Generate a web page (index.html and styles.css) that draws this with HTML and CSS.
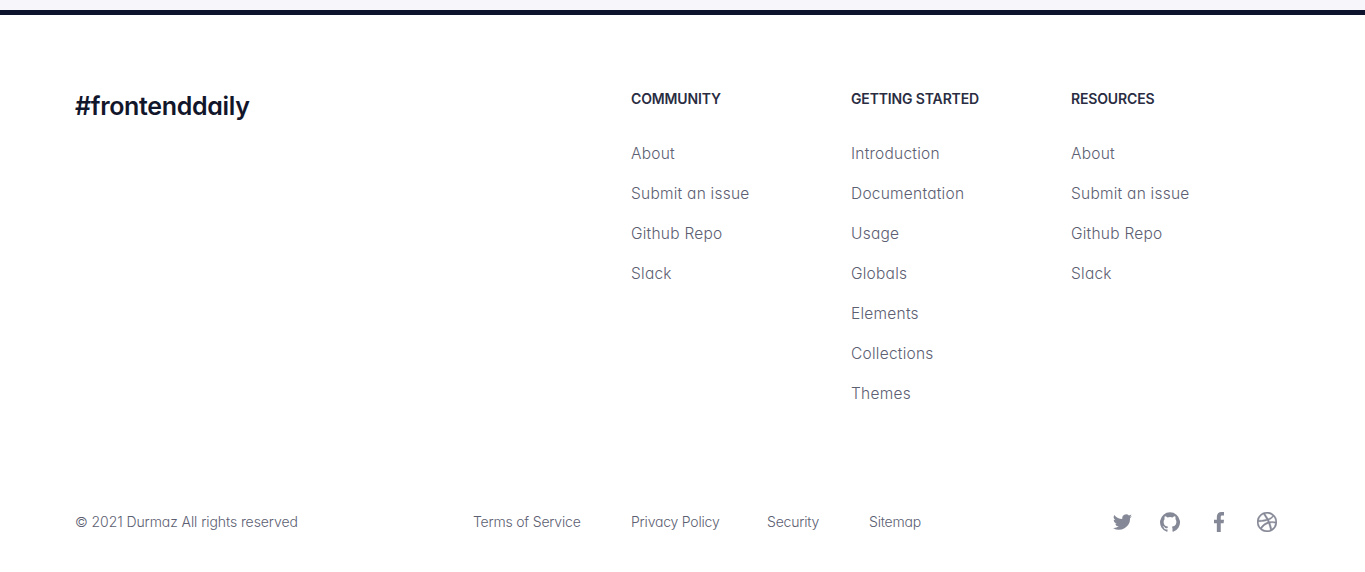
FILE: index.html
```html
<!DOCTYPE html>
<html lang="en">
<head>
<meta charset="utf-8">
<title>#frontenddaily</title>
<link rel="stylesheet" href="styles.css">
</head>
<body>
<footer class="footer">
  <div class="footer-main">
    <a class="brand">#frontenddaily</a>
    <nav class="column">
      <h2 class="heading">COMMUNITY</h2>
      <ul class="links"><li>About</li><li>Submit an issue</li><li>Github Repo</li><li>Slack</li></ul>
    </nav>
    <nav class="column">
      <h2 class="heading">GETTING STARTED</h2>
      <ul class="links"><li>Introduction</li><li>Documentation</li><li>Usage</li><li>Globals</li><li>Elements</li><li>Collections</li><li>Themes</li></ul>
    </nav>
    <nav class="column">
      <h2 class="heading">RESOURCES</h2>
      <ul class="links"><li>About</li><li>Submit an issue</li><li>Github Repo</li><li>Slack</li></ul>
    </nav>
  </div>
  <div class="footer-bottom">
    <span class="copyright">© 2021 Durmaz All rights reserved</span>
    <nav class="legal"><a>Terms of Service</a><a>Privacy Policy</a><a>Security</a><a>Sitemap</a></nav>
    <div class="social">
      <svg class="icon icon-twitter" viewBox="0 0 24 24"><path d="M23.95 4.57a10 10 0 0 1-2.82.78 4.96 4.96 0 0 0 2.16-2.73 9.9 9.9 0 0 1-3.12 1.19 4.92 4.92 0 0 0-8.38 4.48A13.98 13.98 0 0 1 1.64 3.16a4.92 4.92 0 0 0 1.52 6.57 4.9 4.9 0 0 1-2.23-.61v.06a4.92 4.92 0 0 0 3.95 4.83 4.9 4.9 0 0 1-2.22.08 4.93 4.93 0 0 0 4.6 3.42A9.87 9.87 0 0 1 0 19.54a13.99 13.99 0 0 0 21.54-12.42A9.94 9.94 0 0 0 23.95 4.57z"/></svg>
      <svg class="icon" viewBox="0 0 24 24"><path d="M12 .3a12 12 0 0 0-3.79 23.38c.6.11.82-.26.82-.58v-2.23c-3.34.73-4.04-1.42-4.04-1.42-.55-1.38-1.34-1.75-1.34-1.75-1.09-.75.08-.73.08-.73 1.21.08 1.84 1.24 1.84 1.24 1.07 1.83 2.81 1.3 3.5.99.1-.78.42-1.3.76-1.6-2.66-.3-5.47-1.34-5.47-5.93 0-1.31.47-2.38 1.24-3.22-.14-.3-.54-1.52.1-3.18 0 0 1.01-.32 3.3 1.23a11.5 11.5 0 0 1 6.01 0c2.28-1.55 3.29-1.23 3.29-1.23.64 1.66.24 2.88.12 3.18.76.84 1.23 1.91 1.23 3.22 0 4.61-2.81 5.63-5.48 5.92.42.36.81 1.1.81 2.22v3.29c0 .32.22.7.83.58A12 12 0 0 0 12 .3z"/></svg>
      <svg class="icon icon-facebook" viewBox="0 0 24 24"><path d="M9.4 24V13.4H6V9.2h3.4V6c0-3.7 2-6 5.8-6H18v4.2h-2c-1.6 0-1.9.8-1.9 2v3H18l-.5 4.2h-3.4V24z"/></svg>
      <svg class="icon" viewBox="0 0 24 24"><path stroke="#858896" stroke-width=".4" d="M12 24C5.38 24 0 18.62 0 12S5.38 0 12 0s12 5.38 12 12-5.38 12-12 12zm10.12-10.36c-.35-.11-3.17-.95-6.38-.44 1.34 3.68 1.89 6.68 1.99 7.31a10.3 10.3 0 0 0 4.39-6.87zm-6.12 7.81c-.15-.9-.74-4.03-2.19-7.77l-.06.02C7.97 15.72 5.88 19.74 5.7 20.12A10.16 10.16 0 0 0 12 22.27c1.42 0 2.77-.29 4-.82zM4.38 18.88c.23-.4 3.04-5.06 8.33-6.77.14-.04.27-.08.4-.12-.26-.58-.54-1.16-.83-1.74-5.12 1.53-10.08 1.47-10.53 1.46v.31c0 2.64.99 5.04 2.63 6.86zM1.97 9.92c.46.01 4.68.03 9.48-1.25A61.4 61.4 0 0 0 7.65 2.75 10.3 10.3 0 0 0 1.97 9.92zM9.6 2.05c.28.38 2.15 2.91 3.83 6 3.64-1.37 5.19-3.44 5.37-3.7A10.18 10.18 0 0 0 9.6 2.05zm10.34 3.48c-.22.29-1.94 2.49-5.73 4.04.24.49.47.98.68 1.48l.22.53c3.41-.43 6.8.26 7.14.33a10.2 10.2 0 0 0-2.31-6.38z"/></svg>
    </div>
  </div>
</footer>
</body>
</html>
```
FILE: styles.css
```css
body {
  margin: 0;
  padding-top: 10px;
  background: #f7f7fb;
  font-family: Inter, Lato, sans-serif;
  font-feature-settings: "cv11";
  color: #5c6072;
}
.footer {
  box-sizing: border-box;
  height: 562px;
  padding: 75px 75px 0;
  border-top: 5px solid #0e132d;
  background: #fff;
}
.footer-main {
  display: grid;
  grid-template-columns: 556px 220px 220px 220px;
  height: 411px;
}
.brand {
  font-size: 25px;
  line-height: 32px;
  font-weight: 600;
  letter-spacing: -0.33px;
  color: #12162b;
}
.heading {
  margin: 0 0 36px;
  font-size: 14px;
  line-height: 18px;
  font-weight: 600;
  letter-spacing: -0.15px;
  color: #2a2d42;
}
.links {
  margin: 0;
  padding: 0;
  list-style: none;
  font-size: 15.5px;
  font-weight: 320;
  line-height: 20px;
  letter-spacing: 0.24px;
}
.links li { margin-bottom: 20px; }
.footer-bottom {
  display: grid;
  grid-template-columns: 398px 640px auto;
  align-items: center;
  height: 40px;
  font-size: 14px;
  font-weight: 320;
  letter-spacing: -0.2px;
  white-space: nowrap;
}
.copyright { letter-spacing: -0.08px; }
.legal {
  display: grid;
  grid-template-columns: 158px 136px 102px auto;
}
.social {
  display: flex;
  gap: 28px;
  padding-top: 2px;
}
.icon {
  width: 20px;
  height: 20px;
  fill: #858896;
}
.icon-twitter { width: 19px; }
.icon-facebook { margin-left: 1px; }
```
